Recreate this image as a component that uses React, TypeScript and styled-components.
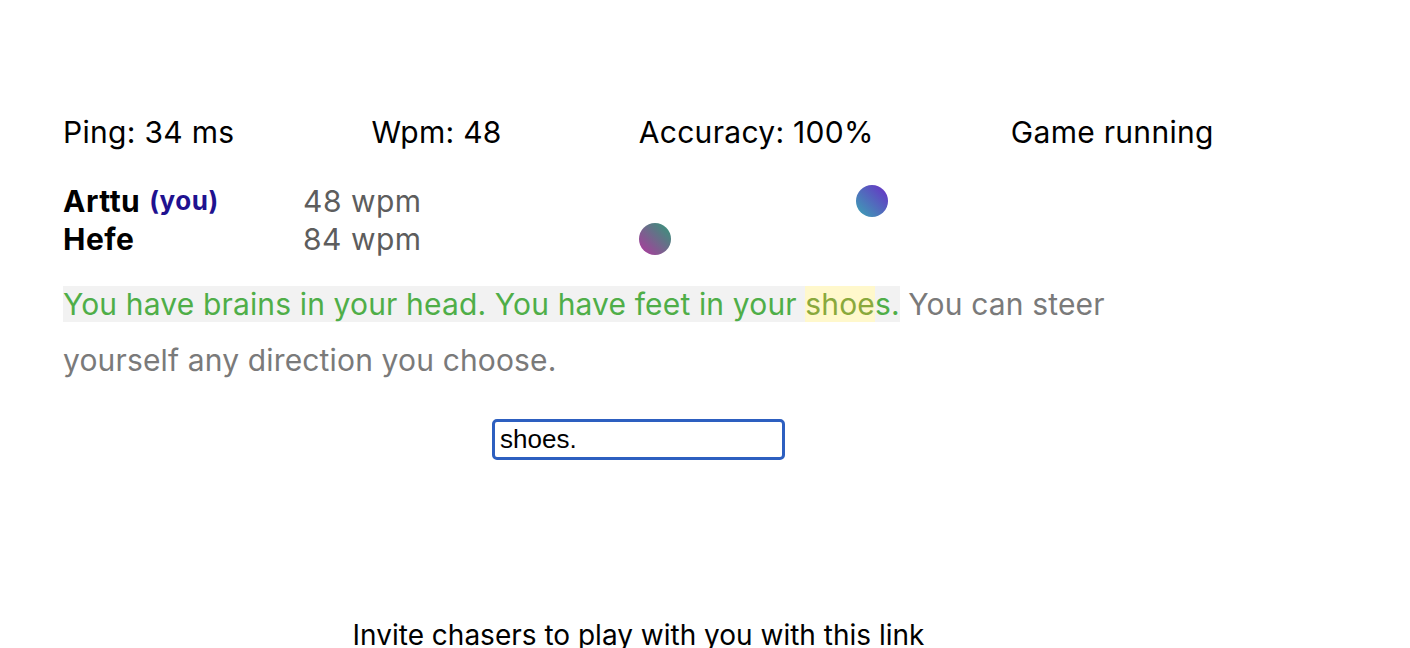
import styled, { createGlobalStyle } from "styled-components";

const GlobalStyle = createGlobalStyle`
  body {
    margin: 0;
    background: #fff;
    font-family: Inter, "Noto Sans", sans-serif;
    color: #000;
  }
`;

const Page = styled.div`
  width: 1151px;
  margin-left: 63px;
  padding-top: 114px;
`;

const Stats = styled.div`
  display: flex;
  gap: 137px;
  font-size: 30px;
  letter-spacing: 0.3px;
  line-height: 36px;
  white-space: nowrap;
`;

const Stat = styled.span`
  flex-shrink: 0;
`;

const Players = styled.div`
  margin-top: 32px;
`;

const PlayerRow = styled.div`
  display: grid;
  grid-template-columns: 240px 137px 640px;
  align-items: center;
  height: 38px;
  font-size: 30px;
  letter-spacing: 0.5px;
`;

const Name = styled.div`
  font-weight: 700;
  white-space: nowrap;
`;

const You = styled.span`
  color: #1f1290;
  font-size: 26px;
  margin-left: 9px;
  position: relative;
  top: -2px;
`;

const Wpm = styled.div`
  color: #5d5d5d;
  white-space: nowrap;
`;

const Track = styled.div`
  position: relative;
  height: 38px;
`;

const Ball = styled.div<{ from: string; to: string }>`
  position: absolute;
  top: 3px;
  width: 32px;
  height: 32px;
  border-radius: 50%;
  background: linear-gradient(45deg, ${(p) => p.from}, ${(p) => p.to});
`;

const Passage = styled.p`
  margin: 18px 0 0;
  font-size: 30px;
  letter-spacing: 0.15px;
  line-height: 56px;
  color: #7a7a7a;
`;

const Typed = styled.span`
  color: #4fae48;
  background: #f2f2f2;
`;

const Current = styled.span`
  color: #8aa93c;
  background: #fff8cc;
`;

const InputWrap = styled.div`
  display: flex;
  justify-content: center;
  margin-top: 31px;
`;

const TypeInput = styled.input`
  width: 293px;
  height: 41px;
  box-sizing: border-box;
  border: 3px solid #2d5fc0;
  border-radius: 5px;
  padding: 0 5px;
  font-family: "Liberation Sans", Arial, sans-serif;
  font-size: 26px;
  color: #000;
  outline: none;
`;

const Invite = styled.div`
  margin-top: 158px;
  text-align: center;
  font-size: 28px;
  line-height: 34px;
  white-space: nowrap;
`;

const players = [
  { name: "Arttu", you: true, wpm: 48, progress: 0.65, from: "#3aa6b4", to: "#6a2cc6" },
  { name: "Hefe", you: false, wpm: 84, progress: 0.311, from: "#b2369f", to: "#2f9a78" },
];

export default function App() {
  return (
    <>
      <GlobalStyle />
      <Page>
        <Stats>
          <Stat>Ping: 34 ms</Stat>
          <Stat>Wpm: 48</Stat>
          <Stat>Accuracy: 100%</Stat>
          <Stat>Game running</Stat>
        </Stats>
        <Players>
          {players.map((p) => (
            <PlayerRow key={p.name}>
              <Name>
                {p.name}
                {p.you && <You>(you)</You>}
              </Name>
              <Wpm>{p.wpm} wpm</Wpm>
              <Track>
                <Ball from={p.from} to={p.to} style={{ left: `${p.progress * 640}px` }} />
              </Track>
            </PlayerRow>
          ))}
        </Players>
        <Passage>
          <Typed>
            You have brains in your head. You have feet in your <Current>shoe</Current>s.
          </Typed>{" "}
          You can steer yourself any direction you choose.
        </Passage>
        <InputWrap>
          <TypeInput defaultValue="shoes." />
        </InputWrap>
        <Invite>Invite chasers to play with you with this link</Invite>
      </Page>
    </>
  );
}
